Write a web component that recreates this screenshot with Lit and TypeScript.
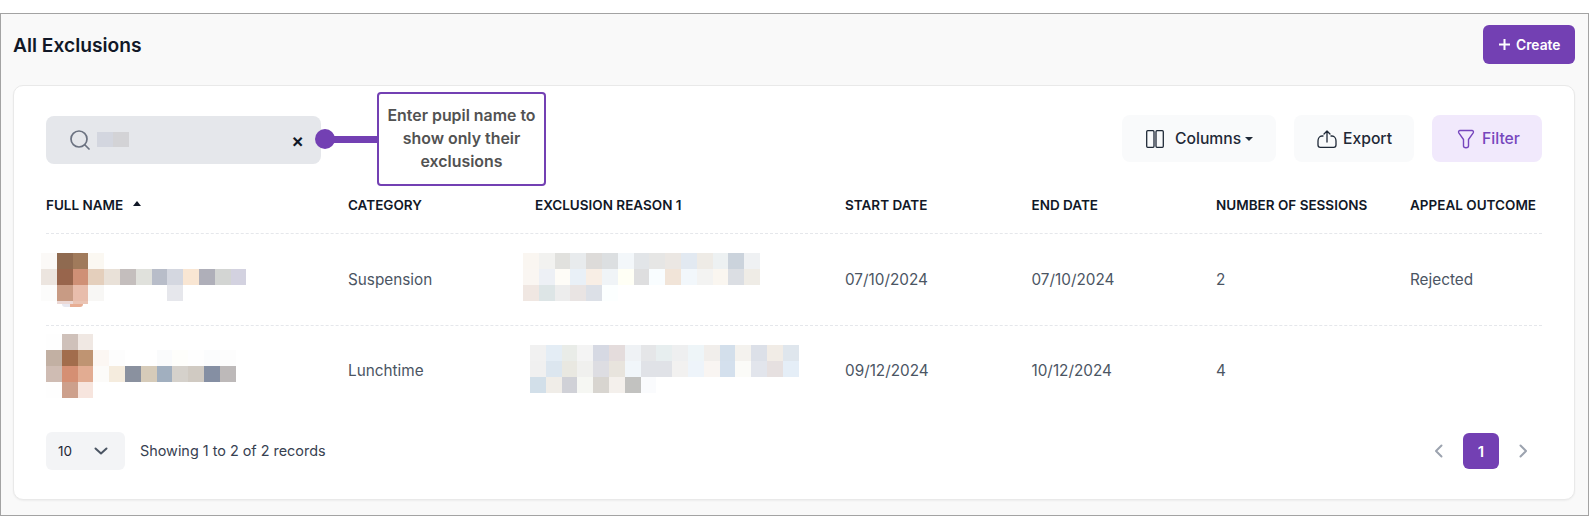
import { LitElement, css, html, svg } from 'lit'
import { customElement } from 'lit/decorators.js'

type Blob = { left: number; top: number; rows: string[][]; tail?: string[] }

const _ = ''

const row1Name: Blob = {
  left: -5,
  top: 0,
  rows: [
    ['#fbf9f7', '#8f6a50', '#a07a5b', '#fbf8f2'],
    ['#ece5df', '#98654c', '#cf9076', '#e4cfbc', '#e9e1d8', '#c4bebd', '#e0e1dc', '#b8bdc9', '#d4d7e0', '#f9e6d3', '#afafb9', '#d3d5d3', '#d3d2e0'],
    ['#fcfcfb', '#c89b84', '#e8bdac', '#f8f7f5', _, _, _, _, '#e6e7ec'],
  ],
  tail: [_, '#ecd9d6', '#eac4b4'],
}

const row2Name: Blob = {
  left: 0,
  top: -5,
  rows: [
    ['#fefefe', '#cfc1ba', '#f0e8e3'],
    ['#c2b0a3', '#a26d4c', '#bf9472', '#fcf7f3', '#fdfdfd', _, _, '#fafbfc', '#fefefb', '#fefefe', '#fbfcfd', '#fdfdfd'],
    ['#cfbcb3', '#d58f73', '#e2ac92', '#fcfbf9', '#f5ecde', '#8a919f', '#d6cbb9', '#a1afbf', '#d5d1cb', '#d0cac2', '#858fa3', '#bdb9b9'],
    ['#fefefe', '#cda08c', '#f7e5de'],
  ],
}

const row1Reason: Blob = {
  left: -12,
  top: -3,
  rows: [
    ['#faf6f1', '#f2f2f0', '#e1e1de', '#e8ebed', '#dddbd9', '#dcdfe1', '#f3f7fa', '#e2e5e8', '#e6e6e5', '#ebe7e3', '#e2e9f1', '#eeebe6', '#edf1f2', '#cbd3dc', '#eff1f3'],
    ['#faf6f2', '#edf0f5', '#fefcf7', '#e9f0f7', '#f8eee5', '#f0f4f7', '#fffff5', '#dededf', '#f9fdff', '#f1e4d8', '#f2f7fb', '#f3f3f2', '#faf6f0', '#dbdee3', '#efece6'],
    ['#f0e7e2', '#dde5e6', '#ededed', '#e9e4e3', '#dce0e7', '#fcffff'],
  ],
}

const row2Reason: Blob = {
  left: -5,
  top: -2,
  rows: [
    ['#f1f1f1', '#e4edf5', '#e9ece8', '#f4f4f4', '#d6d9e3', '#e4dcdc', '#eff2f5', '#e5e6e8', '#e7eeef', '#eeeff0', '#eef5f8', '#f1eeeb', '#d3dfeb', '#f4f2ee', '#dce0e8', '#f1ece6', '#dfe6ed'],
    ['#f0f0f0', '#dce6ef', '#e9e8e1', '#f0f0ee', '#dddde2', '#e8e4dd', '#f1f6fa', '#e0e2e7', '#e0e2e7', '#f2f1f0', '#eef4fa', '#f9f5f2', '#d4e0ed', '#fbfbf8', '#e2e5ec', '#e6e0e0', '#e5eef7'],
    ['#d2dfe9', '#f0ede8', '#d0d1d7', '#f6f7f3', '#d8d5d0', '#f4f0ec', '#c2c2c0', '#fafbfd'],
  ],
}

const headers = ['Full Name', 'Category', 'Exclusion Reason 1', 'Start Date', 'End Date', 'Number of Sessions', 'Appeal Outcome']

const rows = [
  { name: row1Name, category: 'Suspension', reason: row1Reason, start: '07/10/2024', end: '07/10/2024', sessions: '2', outcome: 'Rejected' },
  { name: row2Name, category: 'Lunchtime', reason: row2Reason, start: '09/12/2024', end: '10/12/2024', sessions: '4', outcome: '' },
]

const chevron = (d: string) => svg`<svg viewBox="0 0 16 16" fill="none" stroke="currentColor" stroke-width="2" stroke-linecap="round" stroke-linejoin="round"><path d=${d}/></svg>`

@customElement('app-root')
export class AppRoot extends LitElement {
  static styles = css`
    :host {
      display: block;
      width: 1589px;
      height: 516px;
      padding-top: 13px;
      box-sizing: border-box;
      background: #fff;
      font-family: Inter, "Liberation Sans", sans-serif;
      color: #4b5563;
    }

    .frame {
      height: 503px;
      box-sizing: border-box;
      border: 1px solid #a3a3a3;
      background: #f9f9f9;
      padding: 11px 13px 15px 12px;
    }

    .top {
      display: flex;
      align-items: center;
      justify-content: space-between;
      height: 39px;
      margin-bottom: 21px;
    }

    h1 {
      margin: 0;
      font-size: 19.2px;
      font-weight: 600;
      color: #111827;
    }

    .create {
      display: flex;
      align-items: center;
      gap: 6px;
      width: 92px;
      height: 39px;
      box-sizing: border-box;
      padding-left: 16px;
      border-radius: 6px;
      background: #7340b3;
      color: #fff;
      font-size: 13.8px;
      font-weight: 600;
    }

    .create svg {
      width: 11px;
      height: 11px;
    }

    .card {
      position: relative;
      height: 415px;
      box-sizing: border-box;
      background: #fff;
      border: 1px solid #e9e9e9;
      border-radius: 10px;
      padding: 29px 32px 0 32px;
      box-shadow: 0 1px 2px rgb(0 0 0 / 5%);
    }

    .toolbar {
      display: flex;
      justify-content: space-between;
      height: 48px;
    }

    .search {
      display: flex;
      align-items: center;
      width: 275px;
      height: 48px;
      margin-top: 1px;
      box-sizing: border-box;
      padding-left: 24px;
      border-radius: 8px;
      background: #e5e7eb;
    }

    .search .lens {
      width: 20px;
      height: 20px;
      color: #6b7280;
    }

    .search .typed {
      display: flex;
      margin: -2px 0 0 7px;
    }

    .search .typed i {
      width: 16px;
      height: 15px;
    }

    .search .clear {
      margin-left: auto;
      margin-right: 17px;
      margin-top: 1px;
      font-size: 19px;
      line-height: 20px;
      font-weight: 600;
      color: #111827;
    }

    .actions {
      display: flex;
      gap: 18px;
    }

    .action {
      display: flex;
      align-items: center;
      height: 47px;
      box-sizing: border-box;
      border-radius: 8px;
      background: #f9fafb;
      font-size: 15.7px;
      font-weight: 500;
      color: #1f2937;
    }

    .action svg {
      flex: none;
    }

    .columns {
      width: 154px;
      gap: 11px;
      padding-left: 24px;
    }

    .columns svg {
      width: 18px;
      height: 18px;
    }

    .columns .caret {
      width: 0;
      height: 0;
      margin-left: -7px;
      border: 4px solid transparent;
      border-top: 4px solid #1f2937;
      border-bottom: 0;
    }

    .export {
      width: 120px;
      gap: 6px;
      padding-left: 23px;
    }

    .export svg {
      width: 20px;
      height: 20px;
    }

    .filter {
      width: 110px;
      gap: 7px;
      padding-left: 25px;
      background: #f1e9fc;
      color: #7646bd;
    }

    .filter svg {
      width: 18px;
      height: 20px;
    }

    .callout {
      position: absolute;
      left: 363px;
      top: 6px;
      width: 169px;
      height: 94px;
      box-sizing: border-box;
      padding-bottom: 1px;
      display: flex;
      align-items: center;
      justify-content: center;
      text-align: center;
      background: #fff;
      border: 2px solid #7340b3;
      border-radius: 4px;
      font-size: 15.9px;
      font-weight: 600;
      line-height: 23px;
      color: #525252;
    }

    .connector {
      position: absolute;
      left: 301px;
      top: 43px;
      width: 63px;
      height: 20px;
    }

    .connector::before {
      content: "";
      position: absolute;
      left: 0;
      top: 0;
      width: 20px;
      height: 20px;
      border-radius: 50%;
      background: #7340b3;
    }

    .connector::after {
      content: "";
      position: absolute;
      left: 18px;
      top: 6.500px;
      right: 0;
      height: 7px;
      background: #7340b3;
    }

    .grid {
      display: grid;
      grid-template-columns: 302px 187px 310px 186.500px 184.500px 194px 133px;
    }

    .head {
      height: 50px;
      margin-top: 20px;
      border-bottom: 1px dashed #e5e7eb;
      align-items: start;
    }

    .head span {
      display: flex;
      align-items: center;
      gap: 10px;
      height: 44px;
      font-size: 13.500px;
      font-weight: 600;
      text-transform: uppercase;
      color: #111827;
      white-space: nowrap;
    }

    .sort {
      width: 0;
      height: 0;
      margin-top: -3px;
      border: 4.500px solid transparent;
      border-bottom: 5px solid #111827;
      border-top: 0;
    }

    .row {
      height: 91px;
      border-bottom: 1px dashed #e5e7eb;
      align-items: center;
      font-size: 15.300px;
      color: #4b5563;
    }

    .row.last {
      height: 89px;
      border-bottom: 0;
    }

    .blob {
      position: relative;
      display: flex;
      flex-direction: column;
    }

    .blob div {
      display: flex;
      height: 16px;
    }

    .blob i {
      flex: none;
      width: 15.800px;
      height: 16px;
    }

    .blob .tail {
      height: 3px;
      overflow: hidden;
    }

    .blob .chin {
      width: 21px;
      height: 3px;
      margin-left: 21px;
      border-radius: 0 0 10px 10px;
      background: linear-gradient(90deg, #e8e8f0 40%, #e7ad93 40%);
    }

    .foot {
      display: flex;
      align-items: center;
      margin-top: 17px;
    }

    .size {
      display: flex;
      align-items: center;
      justify-content: space-between;
      width: 79px;
      height: 38px;
      box-sizing: border-box;
      padding: 0 16px 0 12px;
      border-radius: 6px;
      background: #f3f4f6;
      font-size: 13.500px;
      color: #1f2937;
    }

    .size svg {
      width: 16px;
      height: 16px;
      color: #4b5563;
    }

    .info {
      margin-left: 15px;
      padding-bottom: 2px;
      font-size: 14.400px;
      color: #374151;
    }

    .pager {
      display: flex;
      align-items: center;
      gap: 16px;
      margin-left: auto;
      margin-right: 11px;
    }

    .pager svg {
      width: 16px;
      height: 16px;
      color: #9ca3af;
    }

    .page {
      display: flex;
      align-items: center;
      justify-content: center;
      width: 36px;
      height: 36px;
      border-radius: 6px;
      background: #7340b3;
      color: #fff;
      font-size: 15px;
      font-weight: 600;
    }
  `

  blob(b: Blob) {
    return html`<div class="blob" style="left:${b.left}px;top:${b.top}px">
      ${b.rows.map(r => html`<div>${r.map(c => html`<i style="background:${c || 'transparent'}"></i>`)}</div>`)}
      ${b.tail ? html`<div class="tail">${b.tail.map(c => html`<i style="background:${c || 'transparent'}"></i>`)}</div><div class="chin"></div>` : ''}
    </div>`
  }

  render() {
    return html`
      <div class="frame">
        <div class="top">
          <h1>All Exclusions</h1>
          <div class="create">
            <svg viewBox="0 0 11 11" fill="none" stroke="currentColor" stroke-width="2"><path d="M5.500 0v11M0 5.500h11"/></svg>
            Create
          </div>
        </div>
        <div class="card">
          <div class="toolbar">
            <div class="search">
              <svg class="lens" viewBox="0 0 20 20" fill="none" stroke="currentColor" stroke-width="1.700" stroke-linecap="round"><circle cx="9" cy="9" r="8"/><path d="M15 15l4 4"/></svg>
              <div class="typed"><i style="background:#d3d6df"></i><i style="background:#d3d3d6"></i></div>
              <span class="clear">×</span>
            </div>
            <div class="actions">
              <div class="action columns">
                <svg viewBox="0 0 18 18" fill="none" stroke="currentColor" stroke-width="1.300"><rect x=".7" y=".7" width="7.300" height="16.600" rx="1"/><rect x="10" y=".7" width="7.300" height="16.600" rx="1"/></svg>
                Columns<span class="caret"></span>
              </div>
              <div class="action export">
                <svg viewBox="0 0 20 20" fill="none" stroke="currentColor" stroke-width="1.300" stroke-linecap="round" stroke-linejoin="round"><path d="M10 13V2M7 5l3-3 3 3M6 7H5C2.500 7 1 9.500 1 12v4c0 1.500.8 2.300 2.300 2.300h13.400c1.500 0 2.300-.8 2.300-2.300v-4c0-2.500-1.500-5-4-5h-1"/></svg>
                Export
              </div>
              <div class="action filter">
                <svg viewBox="0 0 18 20" fill="none" stroke="currentColor" stroke-width="1.400" stroke-linejoin="round"><path d="M3 1.500h12c1.200 0 1.800 1.300 1.200 2.300l-4.700 6.700V17c0 1-1 1.700-2.500 1.700S6.500 18 6.500 17v-6.500L1.800 3.800C1.200 2.800 1.800 1.500 3 1.500z"/></svg>
                Filter
              </div>
            </div>
          </div>
          <div class="connector"></div>
          <div class="callout">Enter pupil name to<br />show only their<br />exclusions</div>

          <div class="grid head">
            ${headers.map((h, i) => html`<span>${h}${i === 0 ? html`<b class="sort"></b>` : ''}</span>`)}
          </div>
          ${rows.map((r, i) => html`
            <div class="grid row ${i === rows.length - 1 ? 'last' : ''}">
              ${this.blob(r.name)}
              <span>${r.category}</span>
              ${this.blob(r.reason)}
              <span>${r.start}</span>
              <span>${r.end}</span>
              <span>${r.sessions}</span>
              <span>${r.outcome}</span>
            </div>
          `)}

          <div class="foot">
            <div class="size">10 ${chevron('M2.500 5.500L8 10.500l5.500-5')}</div>
            <span class="info">Showing 1 to 2 of 2 records</span>
            <div class="pager">
              ${chevron('M10.500 2.500L5 8l5.500 5.500')}
              <span class="page">1</span>
              ${chevron('M5.500 2.500L11 8l-5.500 5.500')}
            </div>
          </div>
        </div>
      </div>
    `
  }
}

declare global {
  interface HTMLElementTagNameMap {
    'app-root': AppRoot
  }
}
